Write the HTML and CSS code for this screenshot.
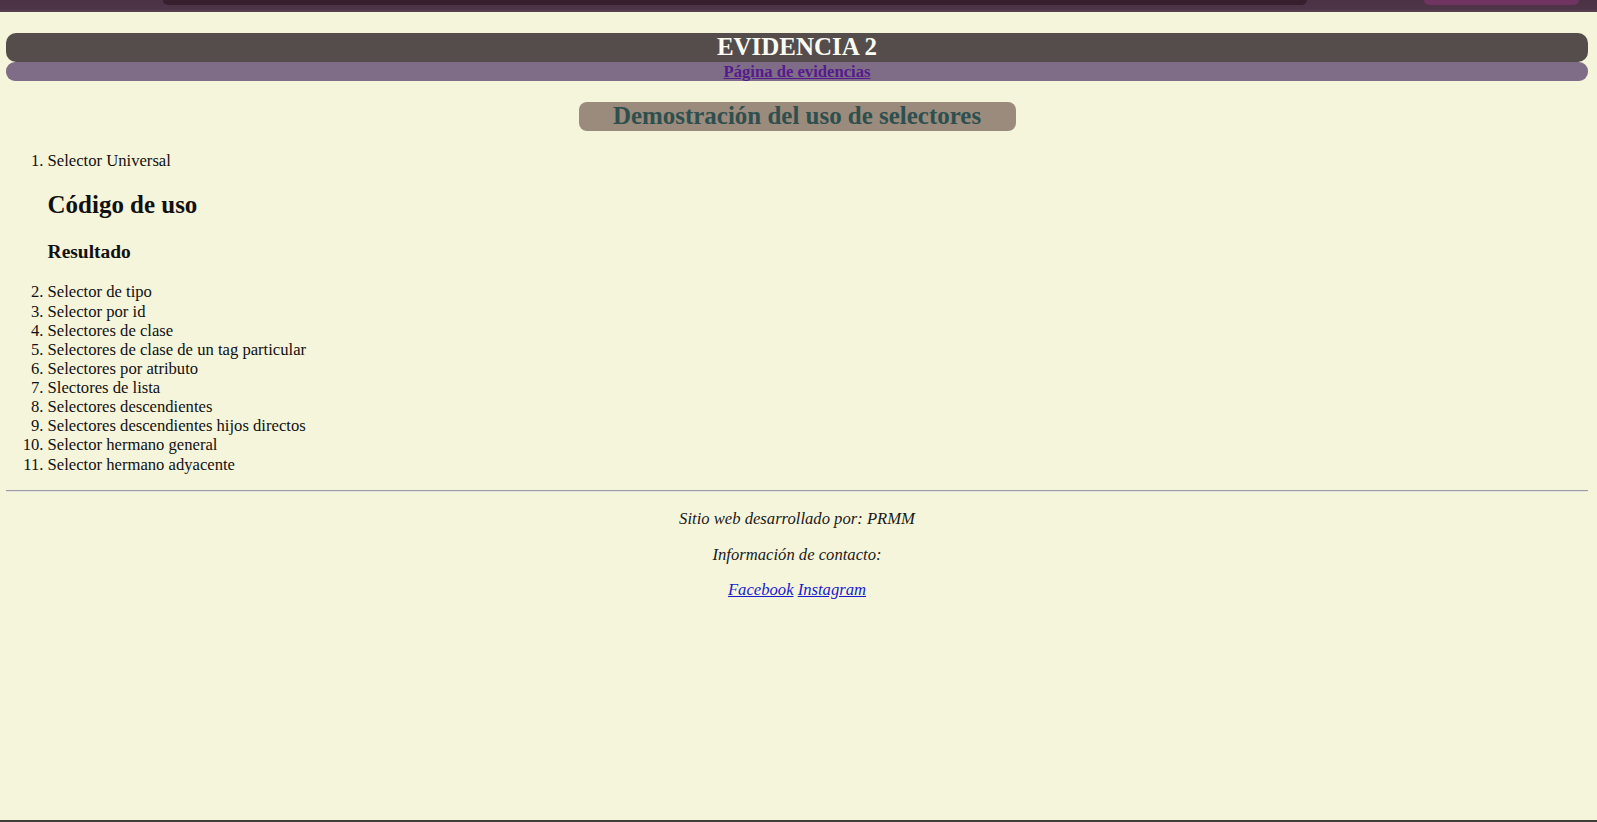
FILE: index.html
```html
<!DOCTYPE html>
<html lang="es">
<head>
<meta charset="utf-8">
<title>Evidencia 2</title>
<link rel="stylesheet" href="styles.css">
</head>
<body>
<div class="frame">
  <div class="chrome-top">
    <div class="chrome-bar"></div>
    <div class="chrome-btn"></div>
  </div>
  <div class="page">
    <header class="site-header">
      <h2 class="site-title">EVIDENCIA 2</h2>
      <nav class="site-nav"><a href="#" class="nav-link">Página de evidencias</a></nav>
    </header>
    <main class="content">
      <h2 class="section-title">Demostración del uso de selectores</h2>
      <ol class="selector-list">
        <li>Selector Universal
          <h2 class="code-title">Código de uso</h2>
          <h3 class="result-title">Resultado</h3>
        </li>
        <li>Selector de tipo</li>
        <li>Selector por id</li>
        <li>Selectores de clase</li>
        <li>Selectores de clase de un tag particular</li>
        <li>Selectores por atributo</li>
        <li>Slectores de lista</li>
        <li>Selectores descendientes</li>
        <li>Selectores descendientes hijos directos</li>
        <li>Selector hermano general</li>
        <li>Selector hermano adyacente</li>
      </ol>
    </main>
    <hr class="divider">
    <footer class="site-footer">
      <p>Sitio web desarrollado por: PRMM</p>
      <p>Información de contacto:</p>
      <p><a href="#" class="social-link">Facebook</a> <a href="#" class="social-link">Instagram</a></p>
    </footer>
  </div>
  <div class="chrome-bottom"></div>
</div>
</body>
</html>
```

FILE: styles.css
```css
html, body {
  margin: 0;
  padding: 0;
  background: #f5f5dc;
}

body {
  font-family: "Liberation Serif", "Times New Roman", serif;
  font-size: 16.64px;
  line-height: 1.15;
  color: #111;
}

.frame {
  min-height: 100vh;
  display: flex;
  flex-direction: column;
}

.chrome-top {
  height: 12px;
  background: linear-gradient(to bottom, #4b3244 0%, #4d3547 75%, #5a4554 100%);
  display: flex;
  align-items: flex-start;
  flex-shrink: 0;
}

.chrome-bar {
  margin-left: 163px;
  width: 1144px;
  height: 5px;
  background: #381f2d;
  border-radius: 0 0 8px 8px;
}

.chrome-btn {
  margin-left: 117px;
  width: 155px;
  height: 5px;
  background: #6f3462;
  border-radius: 0 0 8px 8px;
}

.page {
  flex: 1;
  display: flow-root;
  padding: 0 9px 0 6px;
}

.site-title {
  margin: 0.86em 0 0;
  background: #554d4b;
  color: #fbfbf4;
  text-align: center;
  border-radius: 10px;
  font-size: 1.5em;
  font-weight: bold;
}

.site-nav {
  background: #7f6d87;
  border-radius: 9px;
  text-align: center;
  font-weight: bold;
}

.nav-link {
  color: #551a8b;
  text-decoration: underline;
}

.section-title {
  width: 437px;
  margin: 0.83em auto;
  background: #9a8b7c;
  color: #2f4f4f;
  text-align: center;
  border-radius: 8px;
  font-size: 1.5em;
}

.selector-list {
  margin: 1em 0;
  padding-left: 2.5em;
}

.code-title {
  font-size: 1.5em;
  margin: 0.83em 0;
}

.result-title {
  font-size: 1.17em;
  margin: 1em 0;
}

.divider {
  margin: 0.5em 0;
  border: 0;
  border-top: 1px solid #9c9ca4;
  border-bottom: 1px solid #e4e4dc;
}

.site-footer {
  text-align: center;
  font-style: italic;
  color: #1a1a1a;
}

.site-footer p {
  margin: 1em 0;
}

.social-link {
  color: #1a1acc;
  text-decoration: underline;
}

.chrome-bottom {
  height: 2px;
  background: #3e3e36;
  flex-shrink: 0;
}
```
